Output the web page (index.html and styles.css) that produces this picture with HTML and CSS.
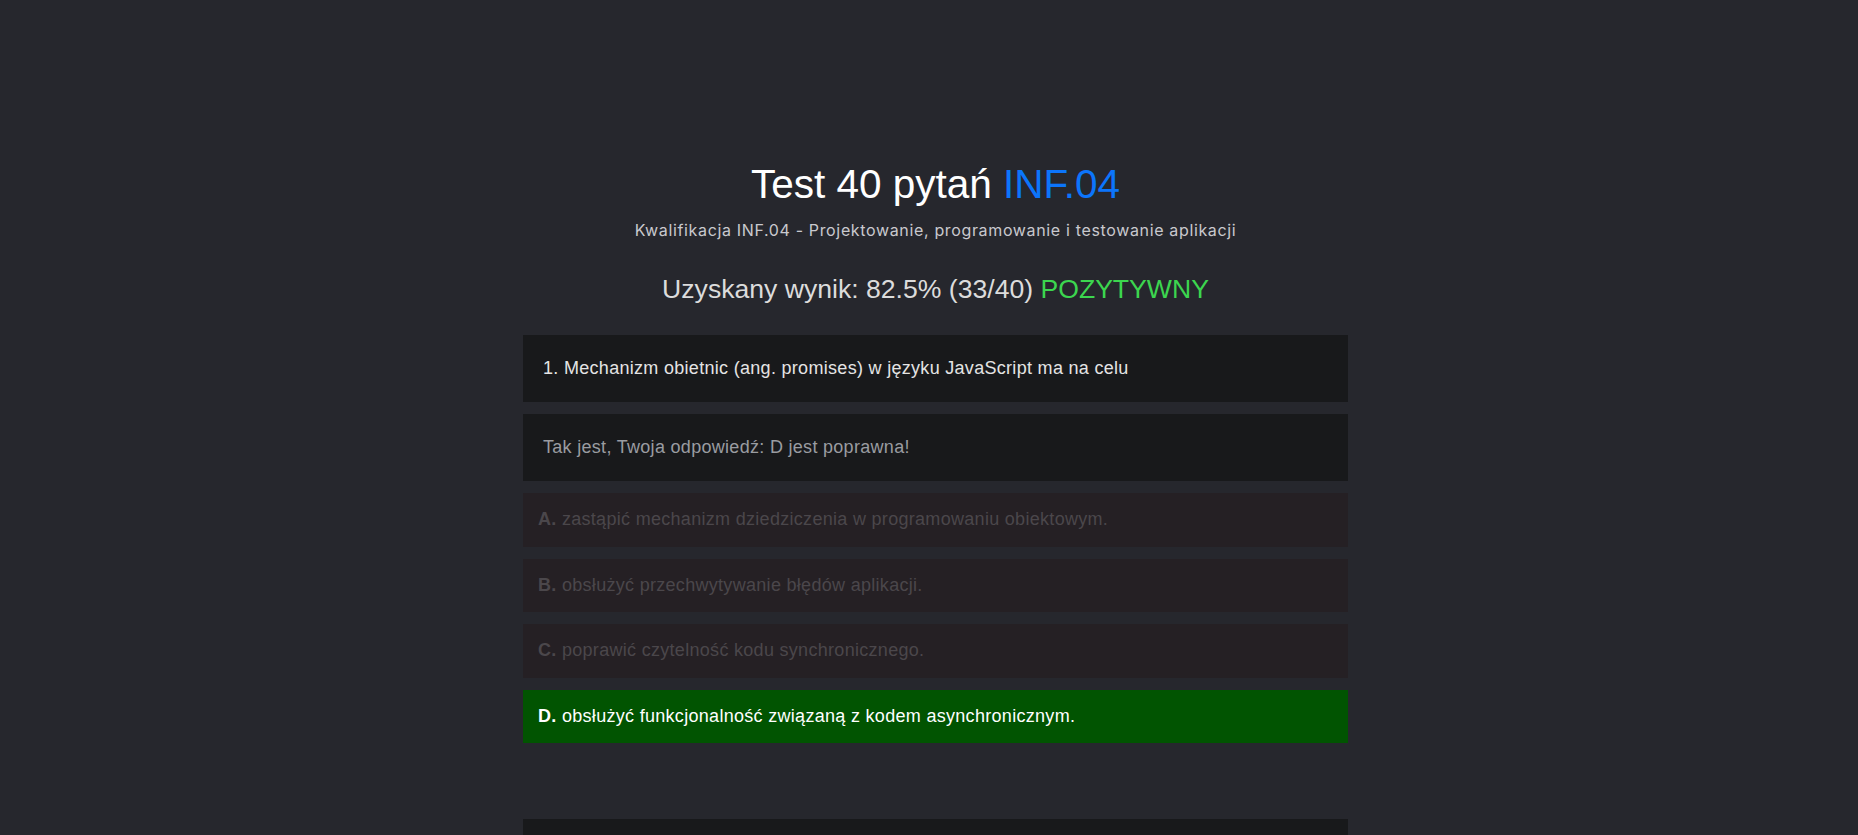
FILE: index.html
```html
<!DOCTYPE html>
<html lang="pl">
<head>
<meta charset="utf-8">
<title>Test 40 pytań INF.04</title>
<link rel="stylesheet" href="styles.css">
</head>
<body>
<div class="page">
  <div class="container">
    <header class="header">
      <h1 class="title">Test 40 pytań <span class="accent">INF.04</span></h1>
      <p class="subtitle">Kwalifikacja INF.04 - Projektowanie, programowanie i testowanie aplikacji</p>
      <h2 class="score">Uzyskany wynik: 82.5% (33/40) <span class="pass">POZYTYWNY</span></h2>
    </header>

    <section class="question">
      <div class="q-box">1. Mechanizm obietnic (ang. promises) w języku JavaScript ma na celu</div>
      <div class="q-box feedback">Tak jest, Twoja odpowiedź: D jest poprawna!</div>
      <div class="option"><b>A.</b> zastąpić mechanizm dziedziczenia w programowaniu obiektowym.</div>
      <div class="option"><b>B.</b> obsłużyć przechwytywanie błędów aplikacji.</div>
      <div class="option"><b>C.</b> poprawić czytelność kodu synchronicznego.</div>
      <div class="option correct"><b>D.</b> obsłużyć funkcjonalność związaną z kodem asynchronicznym.</div>
    </section>

    <section class="question">
      <div class="q-box">2. Który z wymienionych elementów jest typowy dla architektury MVC?</div>
    </section>
  </div>
</div>
</body>
</html>
```

FILE: styles.css
```css
html, body {
  margin: 0;
  padding: 0;
  background: #26272d;
}

body {
  font-family: "Liberation Sans", Arial, sans-serif;
  color: #e2e2e2;
}

.page {
  padding: 160px 0 0 13px;
}

.container {
  width: 825px;
  margin: 0 auto;
}

.header {
  text-align: center;
  display: flex;
  flex-direction: column;
  align-items: center;
}

.title {
  margin: 0;
  font-size: 40.5px;
  line-height: 48px;
  font-weight: 400;
  color: #ffffff;
}

.accent {
  color: #0c75fb;
}

.subtitle {
  margin: 11px 0 0;
  font-family: Inter, "Noto Sans", sans-serif;
  font-size: 16px;
  letter-spacing: 0.65px;
  line-height: 22.5px;
  color: #c9c9ce;
}

.score {
  margin: 31px 0 0;
  font-size: 26.6px;
  line-height: 32px;
  font-weight: 400;
  color: #dcdcdc;
}

.pass {
  color: #3cd64f;
}

.question {
  margin-top: 30.5px;
  display: flex;
  flex-direction: column;
  gap: 12px;
  margin-bottom: 76px;
}

.question + .question {
  margin-top: 0;
}

.q-box {
  background: #18191b;
  padding: 20px 20px;
  font-size: 18px;
  letter-spacing: 0.3px;
  line-height: 27px;
  color: #e4e4e4;
}

.q-box.feedback {
  color: #9a9ca1;
}

.option {
  background: #252024;
  padding: 16px 15px;
  font-size: 18px;
  letter-spacing: 0.3px;
  line-height: 21.5px;
  color: #4b474b;
}

.option b {
  font-weight: 700;
}

.option.correct {
  background: #015401;
  color: #ffffff;
}
```
